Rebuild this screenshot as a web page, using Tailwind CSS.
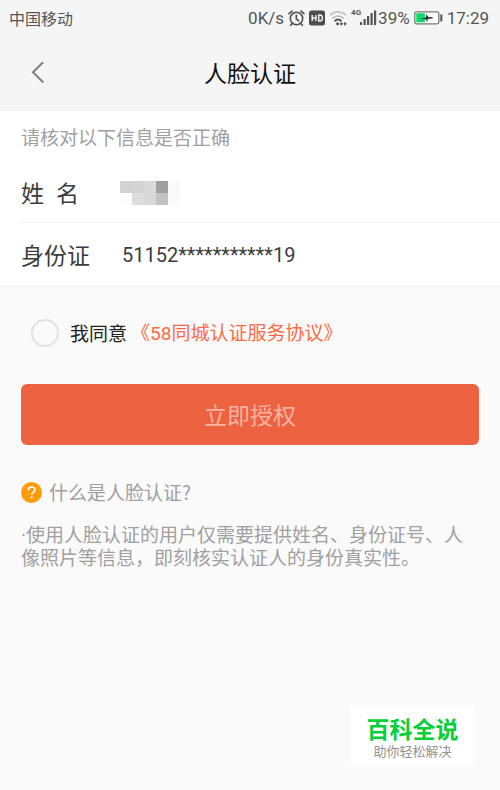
<!DOCTYPE html>
<html lang="zh-CN">
<head>
  <meta charset="UTF-8" />
  <meta name="viewport" content="width=device-width, initial-scale=1.0"/>
  <title>人脸认证</title>
  <script src="https://cdn.jsdelivr.net/npm/@tailwindcss/browser@4"></script>
</head>
<body class="relative min-h-screen bg-[#fafafa] font-['Noto_Sans_CJK_SC',sans-serif] text-[#3c3c3c]">

  <!-- Status bar -->
  <div class="flex h-9 items-center justify-between bg-[#f5f5f5] pl-[9px] pr-[11px] text-[17px] leading-6 text-[#555]">
    <span class="text-[16px]">中国移动</span>
    <div class="flex items-center font-['Roboto',sans-serif]">
      <span class="mr-1">0K/s</span>
      <svg class="mr-1 h-[17px] w-[17px]" viewBox="0 0 17 17" fill="none" stroke="#505050" stroke-width="1.6" stroke-linecap="round">
        <circle cx="8.5" cy="8.5" r="6.2" />
        <path d="M8.3 5v3.8l2.4 2M1 3.7 4 1.1M16 3.7 13 1.1M4 13.7l-1.4 1.6M13 13.7l1.4 1.6" />
      </svg>
      <svg class="mr-1 h-[17px] w-4" viewBox="0 0 16 17" fill="none">
        <rect x="0" y="0.5" width="16" height="15" rx="2.5" fill="#4d4d4d" />
        <path d="M3.2 5v6M7 5v6M3.2 8H7M9.7 5v6h1.2c3.3 0 3.3-6 0-6z" stroke="#f5f5f5" stroke-width="1.4" />
      </svg>
      <svg class="mr-1 h-[17px] w-[18px]" viewBox="0 0 18 17" fill="none">
        <path d="M1 5.1c4.6-4.4 11.4-4.4 16 0" stroke="#c4c4c4" stroke-width="1.7" />
        <path d="M3.4 8.3c3.4-3.1 7.8-3.1 11.2 0" stroke="#b8b8b8" stroke-width="1.7" />
        <path d="M5.6 11.2c2-1.9 4.8-1.9 6.8 0" stroke="#505050" stroke-width="1.9" />
        <circle cx="8.6" cy="13.8" r="1.5" fill="#505050" />
        <path d="m10.8 13.8 1.6-1.9 1.6 1.9-1.6 1.9zM14.4 13.8l1.6-1.9 1.6 1.9-1.6 1.9z" fill="#505050" />
      </svg>
      <div class="relative mr-px h-[18px] w-[26px]">
        <span class="absolute left-0 top-0 text-[8px] font-bold leading-[8px]">4G</span>
        <svg class="h-[18px] w-[26px]" viewBox="0 0 26 18" fill="#555">
          <rect x="9" y="13" width="2" height="3" />
          <rect x="12.5" y="10" width="2.2" height="6" />
          <rect x="16" y="7" width="2.2" height="9" />
          <rect x="19.5" y="4" width="2.2" height="12" />
          <rect x="23" y="1.5" width="2.2" height="14.5" />
        </svg>
      </div>
      <span class="mr-1">39%</span>
      <svg class="mr-1 h-[15px] w-[29px]" viewBox="0 0 29 15" fill="none">
        <rect x="0.8" y="0.8" width="24" height="12" rx="1.8" fill="#fff" stroke="#777" stroke-width="1.3" />
        <rect x="2.3" y="2.3" width="8.5" height="9" fill="#08d968" />
        <rect x="26.3" y="3.5" width="2" height="7" fill="#555" />
        <path d="M6.5 7.9 12 6.3v-3l2.5 2.8 4.2.1v1.2l-5 .6v2.8l-2.3-2.6z" fill="#333" />
      </svg>
      <span>17:29</span>
    </div>
  </div>

  <!-- Title bar -->
  <header class="grid h-[75px] grid-cols-[1fr_auto_1fr] items-center bg-[#f5f5f5] px-5">
    <button type="button" aria-label="返回" class="flex h-9 w-9 items-center justify-center">
      <svg class="h-6 w-6" viewBox="0 0 24 24" fill="none" stroke="#808080" stroke-width="2">
        <path d="M17.3 0 7 10.2 17.3 20.5" />
      </svg>
    </button>
    <h1 class="pb-1 text-[23px] leading-8 text-[#111]">人脸认证</h1>
  </header>

  <!-- Identity info -->
  <section class="border-b border-[#f2f2f2] bg-white pl-[21px]">
    <p class="py-3 text-[19px] leading-7 text-[#a0a0a0]">请核对以下信息是否正确</p>
    <dl>
      <div class="flex h-[60px] items-center border-b border-[#f4f4f4] text-[23px]">
        <dt class="flex w-[99px] gap-3"><span>姓</span><span>名</span></dt>
        <dd class="grid grid-cols-5">
          <span class="h-3 w-3 bg-[#d2d2d2]"></span>
          <span class="h-3 w-3 bg-[#d3d3d3]"></span>
          <span class="h-3 w-3 bg-[#d9d9d9]"></span>
          <span class="h-3 w-3 bg-[#a0a0a0]"></span>
          <span class="h-3 w-3 bg-[#f9f9f9]"></span>
          <span class="h-3 w-3 bg-[#fdfdfd]"></span>
          <span class="h-3 w-3 bg-[#dcdcdc]"></span>
          <span class="h-3 w-3 bg-[#d8d8d8]"></span>
          <span class="h-3 w-3 bg-[#c2c2c2]"></span>
          <span class="h-3 w-3 bg-[#fafafa]"></span>
        </dd>
      </div>
      <div class="flex h-[63px] items-center text-[23px]">
        <dt class="w-[101px]">身份证</dt>
        <dd class="font-['Roboto',sans-serif] text-[20px]">51152***********19</dd>
      </div>
    </dl>
  </section>

  <main class="px-[21px]">
    <div class="flex h-[97px] items-center pb-[6px] pl-[10px] text-[19px] leading-7">
      <input type="checkbox" id="agree" class="mr-[11px] h-7 w-7 appearance-none rounded-full border-2 border-[#e3e3e3] checked:border-[#ed6240] checked:bg-[#ed6240]" />
      <label for="agree" class="text-[#222]">我同意</label>
      <a href="#" class="ml-1 text-[#ff6a45]">《<span class="font-['Roboto',sans-serif]">58</span>同城认证服务协议》</a>
    </div>

    <button type="button" class="h-[61px] w-full rounded-md bg-[#ed6240] text-[23px] text-[#f9b3a0]">立即授权</button>

    <div class="flex items-center gap-[7px] pt-[33px] text-[19px] leading-7 text-[#a0a0a0]">
      <svg class="h-[21px] w-[21px]" viewBox="0 0 21 21" fill="none">
        <circle cx="10.5" cy="10.5" r="10.5" fill="#ff9d09" />
        <path d="M7.2 8.2c0-4.2 6.7-4.2 6.7-.3 0 2.4-3.3 2.6-3.3 5" stroke="#fff" stroke-width="1.6" />
        <circle cx="10.6" cy="15.6" r="1.1" fill="#fff" />
      </svg>
      <h2>什么是人脸认证?</h2>
    </div>
    <p class="pt-[18px] font-['Roboto','Noto_Sans_CJK_SC',sans-serif] text-[19px] leading-[23px] text-[#a0a0a0]">·使用人脸认证的用户仅需要提供姓名、身份证号、人像照片等信息，即刻核实认证人的身份真实性。</p>
  </main>

  <!-- Site badge -->
  <div class="absolute bottom-[25px] right-[25px] flex h-[60px] w-[125px] flex-col items-center bg-white pt-[13px] font-['Roboto','Noto_Sans_CJK_SC',sans-serif]">
    <span class="text-[23px] font-bold leading-[26px] text-[#06cf3a]">百科全说</span>
    <span class="text-[13px] leading-4 text-[#929292]">助你轻松解决</span>
  </div>

</body>
</html>
